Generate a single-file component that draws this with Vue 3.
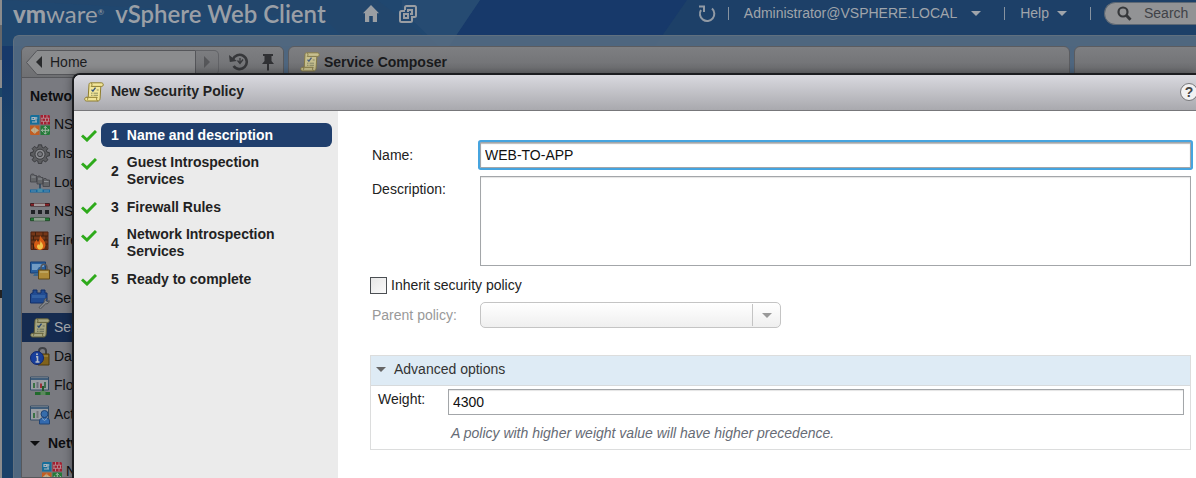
<script setup>
import { ref } from 'vue'

const navItems = [
  { icon: 'nsx', label: 'NSX Home' },
  { icon: 'gear', label: 'Installation' },
  { icon: 'switch', label: 'Logical Switches' },
  { icon: 'edges', label: 'NSX Edges' },
  { icon: 'firewall', label: 'Firewall' },
  { icon: 'spoof', label: 'SpoofGuard' },
  { icon: 'services', label: 'Service Definitions' },
  { icon: 'scroll', label: 'Service Composer', selected: true },
  { icon: 'data', label: 'Data Security' },
  { icon: 'flow', label: 'Flow Monitoring' },
  { icon: 'activity', label: 'Activity Monitoring' }
]

const steps = ['Name and description', 'Guest Introspection Services', 'Firewall Rules', 'Network Introspection Services', 'Ready to complete']
const current = ref(0)

const name = ref('WEB-TO-APP')
const description = ref('')
const inherit = ref(false)
const weight = ref('4300')
const advancedOpen = ref(true)
</script>

<template>
  <div class="page">
    <svg class="defs" width="0" height="0" aria-hidden="true">
      <defs>
        <symbol id="i-scroll" viewBox="0 0 20 20">
          <path d="M5 2.5C5 1.2 6 .8 7 .8h10.2c1.5 0 2.3 1 2 2.4-.1.8-.8 1.2-1.6 1.2h-.8l-.7 11.8c-.1 1.8-1 2.8-2.4 2.8H2.6C1.2 19 .6 18 .8 16.8c.1-1 .8-1.5 1.6-1.5h1.8z" fill="#f2e69a" stroke="#8d7c2e" />
          <path d="M7 .9c1.2.4 1.3 2.4.2 3.5h9.6M4.2 15.3h9c-1 1-.8 3.2.5 3.7M2.6 15.4c1.3.3 1.5 1.8.6 2.4" fill="none" stroke="#8d7c2e" />
          <path d="M7.5 7.6l1.4 1.6 2.6-3.5" fill="none" stroke="#35567f" stroke-width="1.4" />
          <path d="M12.7 8h2M7 11.2h1.5M9.5 11.2H14M7 13.3h1.5M9.5 13.3H14" stroke="#8f905f" />
        </symbol>
        <symbol id="i-nsx" viewBox="0 0 20 20">
          <path d="M0 1.5Q0 0 1.5 0H9.5v9.5H0z" fill="#176e99" />
          <path d="M10.5 0h8Q20 0 20 1.5v8h-9.5z" fill="#a31f30" />
          <path d="M0 10.500h9.500V20h-8Q0 20 0 18.500z" fill="#c15e22" />
          <path d="M10.500 10.500H20v8q0 1.500-1.500 1.500h-8z" fill="#247a38" />
          <path d="M2 2.500h2.500v2H2zM6 2v5.500M2 7h5M7.500 3h-3" fill="none" stroke="#a9b5bd" stroke-width="1.200" />
          <path d="M11 3.200h8.500M11 6.300h8.500M13.500 0v3M17 0v3M12 3.200v3M15.500 3.200v3M18.500 3.200v3M13.500 6.300v3M17 6.300v3" stroke="#b99a9f" stroke-width=".8" />
          <path d="M1 15.200l3-2.500v5zM5 13l3.500 2.300L5 17.800zM4.800 11.500v7.500" fill="#bdb08f" stroke="#bdb08f" stroke-width=".8" />
          <path d="M15.300 11.500v7.500M11.500 15.300H19M13.800 13l1.500-1.600 1.500 1.600M13.800 17.600l1.500 1.600 1.500-1.600M13 13.800l-1.600 1.500 1.600 1.500M17.600 13.800l1.600 1.500-1.600 1.500" fill="none" stroke="#a3b8a7" />
        </symbol>
        <symbol id="i-gear" viewBox="0 0 20 20">
          <g fill="#5c5d60" stroke="#303134" stroke-width=".8">
            <path d="M8.400.8h3.200l.5 2.400 1.400.6 2.100-1.400 2.200 2.200-1.400 2.100.6 1.400 2.400.5v3.200l-2.400.5-.6 1.400 1.400 2.100-2.200 2.200-2.100-1.400-1.400.6-.5 2.400H8.400l-.5-2.400-1.400-.6L4.400 18l-2.200-2.200 1.400-2.100-.6-1.400-2.400-.5V8.600L3 8.100l.6-1.400-1.400-2.100 2.200-2.200 2.100 1.400 1.400-.6z" />
            <circle cx="10" cy="10.200" r="5" fill="#8b8c90" />
            <circle cx="10" cy="10.200" r="2.500" fill="#77787d" />
          </g>
        </symbol>
        <symbol id="i-switch" viewBox="0 0 20 20">
          <path d="M.5 9V2.500l1-1.500h2l1 1.500h2V9zM7 11V4.500L8 3h2l1 1.500h2V11zM13 13.500V7l1-1.500h2L17 7h2.500v6.500z" fill="#636568" stroke="#414347" stroke-width=".8" />
          <path d="M1.500 4h4M8 6h4M14 8.500h4.500" stroke="#8e9196" />
          <path d="M10 11v6" stroke="#26435c" stroke-width="1.500" />
          <path d="M0 16.500h20v3H0z" fill="#15679f" /><path d="M7.500 15.500h5v3.500h-5z" fill="#488ba7" /><path d="M1 18h5M14 18h5" stroke="#6293b3" />
        </symbol>
        <symbol id="i-edges" viewBox="0 0 20 20">
          <path d="M.5 1.500h19V4H.5z" fill="#8d2027" stroke="#3f2024" /><path d="M4 1.500h11V4H4z" fill="#a19698" />
          <path d="M1 8h4v4H1zM8 8h4v4H8zM15 8h4v4h-4z" fill="#202226" />
          <path d="M.5 16h19v2.700H.5z" fill="#218238" stroke="#234b29" /><path d="M4 16h11v2.700H4z" fill="#8d9b8e" />
        </symbol>
        <symbol id="i-firewall" viewBox="0 0 20 20">
          <path d="M1 1h17v17.500H1z" fill="#753718" stroke="#522310" />
          <path d="M1 5h17M1 9h17M1 13h17M5.500 1v4M13 1v4M3.500 5v4M16 5v4M5.500 9v4M14 9v4M3.500 13v5M16 13v5" stroke="#3f200e" />
          <path d="M10 4c.5 2.700 5.500 5.500 5.500 9.800 0 3-2.500 5.200-5.500 5.200S4 17 4 14c0-2.500 1.600-4 2.500-5.500.6 1.700 1 2.200 1.700 2.700C9.700 9 9.800 6.600 10 4z" fill="#d55b13" />
          <path d="M10.500 9.500c.5 2 3 3.500 2.500 6-.3 1.800-1.500 3-3 3s-3-1.200-3-3c0-1 .6-1.800 1.200-2.500l1 1.200c1-1.300 1.300-3 1.300-4.700z" fill="#efc24a" />
        </symbol>
        <symbol id="i-spoof" viewBox="0 0 20 20">
          <path d="M.5 2h15v11H.5z" fill="#285e9c" stroke="#183f75" /><path d="M2 4h12v3H9l-2 3H2z" fill="#709ac3" /><path d="M5 13h5v3H3" fill="#3a668e" />
          <path d="M11 10V8c0-5 6-5 6 0v2" fill="none" stroke="#54565b" stroke-width="1.600" />
          <path d="M8.500 10h11v9h-11z" fill="#ad8a38" stroke="#5f481a" /><path d="M10 12h8" stroke="#ccbb7e" />
        </symbol>
        <symbol id="i-services" viewBox="0 0 20 20">
          <path d="M.5 5l1.500-1h1V1h4v3h4V1h4v3h2v10H.5z" fill="#214b91" stroke="#132f68" /><path d="M2 6h13v3H2z" fill="#315fa2" />
          <path d="M9 18.500l5.200-5.400c-.6-2 .8-3.700 2.600-3.800l-1 2 1.400 1.400 2-1c.2 2-1.600 3.600-3.500 3.100l-5.200 5z" fill="#86898d" stroke="#404246" stroke-width=".8" />
        </symbol>
        <symbol id="i-data" viewBox="0 0 20 20">
          <path d="M9 7V4c0-4 7-4 7 0v4" fill="none" stroke="#3f4145" stroke-width="2" /><path d="M8 7h11v11H8z" fill="#80621b" stroke="#4e3b10" /><path d="M10 9h8" stroke="#aa9250" />
          <circle cx="7" cy="11" r="6.500" fill="#183f9c" stroke="#12276b" /><path d="M6 9.800h1.500v5M5.500 15h4" fill="none" stroke="#b4bac4" stroke-width="1.600" /><circle cx="7" cy="7.300" r="1" fill="#b4bac4" />
        </symbol>
        <symbol id="i-flow" viewBox="0 0 20 20">
          <path d="M.5 1h18v13H.5z" fill="#9a9ea3" stroke="#344d66" /><path d="M1 2h17v2H1z" fill="#405d7a" /><path d="M3 7h2v5H3z" fill="#397244" /><path d="M6.500 6h2v6h-2z" fill="#68707a" /><path d="M10 7.500h2V12h-2z" fill="#9a3037" /><path d="M14 6h2v6h-2z" fill="#416e50" />
          <path d="M13 10v6" stroke="#245a2d" stroke-width="2" /><path d="M5 17.500h15" stroke="#216b2c" stroke-width="3" /><path d="M10.500 15h5v4h-5z" fill="#5b895d" />
        </symbol>
        <symbol id="i-activity" viewBox="0 0 20 20">
          <path d="M.5 1h18v14H.5z" fill="#9a9ea3" stroke="#344d66" /><path d="M1 2h17v2H1z" fill="#405d7a" /><path d="M3 8h2v5H3z" fill="#397244" /><path d="M6.500 6h2v7h-2z" fill="#75777b" />
          <circle cx="14.500" cy="9" r="3.500" fill="#376dab" stroke="#1f4476" /><path d="M9.500 19v-3c0-2 2-3.500 5-3.500s5 1.500 5 3.500v3z" fill="#3269ae" stroke="#1f4476" /><path d="M12 13.500l2.500 2 2.500-2" fill="none" stroke="#86a5c3" />
        </symbol>
      </defs>
    </svg>

    <div class="edge"></div>
    <div class="app">
      <svg class="rays" viewBox="0 0 1194 46" preserveAspectRatio="none" aria-hidden="true">
        <path d="M0 0H478L447 46H0z" fill="#20476f" />
        <path d="M0 0H375L435 46H350L322 18z" fill="#24466b" opacity=".6" />
        <path d="M400 0H478L447 46h-10L400 10z" fill="#2a4d73" opacity=".7" />
        <path d="M685 0H1194V46H653z" fill="#1d4068" />
      </svg>

      <header class="top">
        <h1 class="brand"><span class="vm"><b>vm</b>ware<sup>®</sup></span> vSphere Web Client</h1>
        <nav class="quick" aria-label="Quick links">
          <button type="button" aria-label="Home"><svg width="16" height="17" viewBox="0 0 16 17"><path d="M8 0l8 8.300h-2V17H9.800v-6H6.200v6H2V8.300H0z" fill="#9a9ea3" /></svg></button>
          <button type="button" aria-label="Open windows"><svg width="18" height="18" viewBox="0 0 18 18" fill="none" stroke="#9a9ea3" stroke-width="2"><path d="M6 5V2.500Q6 1 7.500 1h8Q17 1 17 2.500v8q0 1.500-1.500 1.500H13v3.500q0 1.500-1.500 1.500h-9Q1 17 1 15.500v-8Q1 6 2.500 6H6" /><path d="M9 7V5h4v4h-2" /><path d="M5 9h4v4H5z" /></svg></button>
        </nav>
        <div class="account">
          <button type="button" aria-label="Refresh"><svg width="18" height="18" viewBox="0 0 18 18" fill="none" stroke="#919aa5" stroke-width="2"><path d="M14 3.500A7.200 7.200 0 1 1 3 5" /><path d="M1 1.500h5V7" /></svg></button>
          <span class="bar"></span>
          <button type="button" class="menu user">Administrator@VSPHERE.LOCAL<i class="caret"></i></button>
          <span class="bar"></span>
          <button type="button" class="menu">Help<i class="caret"></i></button>
          <span class="bar"></span>
          <label class="search">
            <svg width="15" height="15" viewBox="0 0 15 15" fill="none" stroke="#36383b"><circle cx="6" cy="6" r="4.500" stroke-width="2.200" /><path d="M9.500 9.500l4 4.200" stroke-width="3" /></svg>
            <input type="text" placeholder="Search" aria-label="Search" />
          </label>
        </div>
      </header>

      <div class="frame">
        <aside class="navigator">
          <div class="crumbs">
            <button type="button" class="back">
              <svg class="outline" viewBox="0 0 170 25" preserveAspectRatio="none" aria-hidden="true"><path d="M.5 12.500L11 .5H169.500V24.500H11z" fill="#8b8c8e" stroke="#55565a" /></svg>
              <svg class="arrow" width="6" height="12" viewBox="0 0 6 12"><path d="M6 0v12L0 6z" fill="#292a2c" /></svg>
              <span>Home</span>
            </button>
            <button type="button" class="next" aria-label="Forward"><svg width="6" height="12" viewBox="0 0 6 12"><path d="M0 0v12l6-6z" fill="#56575a" /></svg></button>
            <button type="button" class="history" aria-label="History"><svg width="20" height="18" viewBox="0 0 20 18" fill="none" stroke="#37383b"><path d="M3.800 6.500a7.200 7.200 0 1 1 .8 6.500" stroke-width="2.600" /><path d="M0 2l.8 7 7-1z" fill="#37383b" stroke="none" /><path d="M11 5v5M8.500 7.500L11 10.500l3-4" stroke-width="1.300" /></svg></button>
            <button type="button" aria-label="Pin"><svg width="12" height="17" viewBox="0 0 12 17"><path d="M1 0h10v2H9.500v5l2.500 3H7v6l-1 1-1-1v-6H0l2.500-3V2H1z" fill="#303134" /></svg></button>
          </div>
          <nav class="tree" aria-label="Networking">
            <h2>Networking &amp; Security</h2>
            <a v-for="n in navItems" :key="n.label" href="#" :class="{ selected: n.selected }"><svg width="20" height="20"><use :href="'#i-' + n.icon" /></svg>{{ n.label }}</a>
            <button type="button" class="group"><i class="caret"></i>Networking Inventory</button>
            <a href="#" class="child"><svg width="20" height="20"><use href="#i-nsx" /></svg>NSX Managers</a>
          </nav>
        </aside>
        <section class="tab main"><svg width="20" height="20"><use href="#i-scroll" /></svg>Service Composer</section>
        <section class="tab side"></section>
      </div>
    </div>

    <section class="dialog" role="dialog" aria-labelledby="dialog-title">
      <header class="dialog-head">
        <svg width="20" height="20"><use href="#i-scroll" /></svg>
        <h2 id="dialog-title">New Security Policy</h2>
        <button type="button" class="question" aria-label="Help">?</button>
      </header>
      <div class="dialog-body">
        <ol class="steps">
          <li v-for="(s, i) in steps" :key="s">
            <svg class="check" width="16" height="12" viewBox="0 0 16 12"><path d="M1 5.500l5 4.500L15 1" fill="none" stroke="#2eaa1b" stroke-width="3" /></svg>
            <button type="button" :class="{ active: i === current }" @click="current = i"><span class="number">{{ i + 1 }}</span><span class="caption">{{ s }}</span></button>
          </li>
        </ol>
        <form class="form" @submit.prevent>
          <div class="row">
            <label for="name">Name:</label>
            <input id="name" v-model="name" class="text focused" type="text" />
          </div>
          <div class="row">
            <label for="description">Description:</label>
            <textarea id="description" v-model="description" class="text"></textarea>
          </div>
          <label class="tick"><input v-model="inherit" type="checkbox" />Inherit security policy</label>
          <div class="row parent">
            <label for="parent">Parent policy:</label>
            <span class="picker"><select id="parent" disabled></select><span class="drop"><i class="caret"></i></span></span>
          </div>
          <div class="advanced">
            <button type="button" class="toggle" :aria-expanded="advancedOpen" @click="advancedOpen = !advancedOpen"><i class="caret"></i>Advanced options</button>
            <div v-if="advancedOpen" class="options">
              <label for="weight">Weight:</label>
              <div class="value">
                <input id="weight" v-model="weight" class="text" type="text" />
                <p>A policy with higher weight value will have higher precedence.</p>
              </div>
            </div>
          </div>
        </form>
      </div>
    </section>
  </div>
</template>

<style>
body { margin: 0; }
</style>

<style scoped>
* { box-sizing: border-box; }
.page { position: relative; display: flex; height: 100vh; overflow: hidden; font: 14px/17px "Liberation Sans", Arial, sans-serif; color: #222; }
.defs { position: absolute; }
button { margin: 0; padding: 0; border: 0; background: none; font: inherit; color: inherit; text-align: left; }
input, textarea, select { margin: 0; font: inherit; color: #111; outline: none; }
h1, h2, p, ol { margin: 0; padding: 0; }
svg { display: block; flex: none; }
.caret { flex: none; width: 0; height: 0; border: 5px solid transparent; border-top-color: currentColor; border-bottom: 0; }

.edge { flex: none; width: 2px; background: linear-gradient(#8b8b8c 0 25px, #65676a 25px 60px, #8b8b8c 60px 88px, #1d4668 88px 97px, #8b8b8c 97px 290px, #222 290px 298px, #8b8b8c 298px); }
.app { position: relative; flex: 1; min-width: 0; display: flex; flex-direction: column; background: linear-gradient(#17396a, #17396a 60px, #1b4168 120px); }
.rays { position: absolute; top: 0; left: 0; width: 100%; height: 46px; }

.top { position: relative; display: flex; align-items: center; height: 27px; margin-bottom: 8px; padding-left: 11px; color: #a0a5ab; white-space: nowrap; overflow: hidden; }
.brand { display: flex; gap: 11px; font: 600 24px/27px Lato, sans-serif; color: #9a9fa6; }
.vm { font-weight: 400; }
.vm b { font-weight: 900; }
.vm sup { font-size: 8px; line-height: 8px; vertical-align: 8px; }
.quick { display: flex; align-items: center; gap: 20px; margin-left: 37px; }
.account { display: flex; align-items: center; margin-left: auto; }
.bar { width: 1px; height: 13px; background: #8793a0; }
.account > button:first-child { margin-right: 12px; }
.menu { display: flex; align-items: center; gap: 8px; margin: 0 23px 0 15px; }
.menu.user { gap: 14px; }
.search { display: flex; align-items: center; gap: 12px; width: 92px; height: 23px; margin-left: 13px; padding-left: 12px; border: 1px solid #5d6874; border-right: 0; border-radius: 12px 0 0 12px; background: #929395; }
.search input { flex: 1; min-width: 0; padding: 0; border: 0; background: none; appearance: none; }
.search input::placeholder { color: #404247; opacity: 1; }

.frame { position: relative; flex: 1; min-height: 0; display: flex; gap: 4px; margin-left: 11px; padding: 10px 0 0 7px; border: solid #60707f; border-width: 1px 0 0 1px; border-radius: 6px 0 0; background: #566c82e0; }
.navigator { flex: none; width: 263px; display: flex; flex-direction: column; border: 1px solid #56585c; border-radius: 6px 6px 0 0; background: #797a80; overflow: hidden; }
.crumbs { flex: none; display: flex; align-items: center; height: 31px; padding-left: 4px; border-bottom: 1px solid #55565a; background: linear-gradient(#7e7f82, #6e6f72); }
.back { position: relative; display: flex; align-items: center; gap: 8px; width: 170px; height: 25px; padding-left: 10px; color: #1b1c1e; }
.outline { position: absolute; inset: 0; width: 100%; height: 100%; }
.arrow, .back span { position: relative; }
.next { display: flex; align-items: center; justify-content: center; width: 23px; height: 25px; border: 1px solid #626367; border-left: 0; border-radius: 0 5px 5px 0; }
.history { margin: 0 13px 0 10px; }
.tree { flex: 1; width: 50px; overflow: hidden; color: #0d0e10; white-space: nowrap; }
.tree h2 { padding: 10px 8px 5px; font-size: 14px; line-height: 17px; }
.tree a { display: flex; align-items: center; gap: 4px; height: 29px; padding-left: 8px; color: inherit; text-decoration: none; }
.tree .selected { background: #152b50; color: #a6a9ae; }
.tree .selected svg { opacity: .65; }
.tree .child { padding-left: 20px; }
.group { display: flex; align-items: center; gap: 8px; height: 28px; padding-left: 8px; font-weight: bold; }
.tab { display: flex; align-items: center; gap: 4px; height: 32px; padding-left: 11px; border: 1px solid #5b5c60; border-radius: 6px 6px 0 0; background: linear-gradient(#7e7f82, #6b6c6f); font-weight: bold; color: #1a1b1d; }
.tab svg { opacity: .65; }
.main { flex: 1; }
.side { flex: none; width: 130px; margin-right: -8px; }

.dialog { position: absolute; inset: 73px 0 0 72px; display: flex; flex-direction: column; border: solid #1c1d20; border-width: 2px 0 0 2px; border-radius: 8px 0 0; background: #fff; box-shadow: 0 0 10px rgba(0, 0, 0, .4); overflow: hidden; }
.dialog-head { flex: none; display: flex; align-items: center; gap: 7px; height: 36px; padding: 0 0 2px 10px; border-bottom: 1px solid #77777a; background: linear-gradient(#d9d9df, #a9a9ae); }
.dialog-head h2 { font-size: 14px; }
.question { width: 18px; height: 18px; margin: 0 -2px 0 auto; border: 1px solid #77777a; border-radius: 50%; background: #f1f1f2; font-weight: bold; line-height: 16px; text-align: center; color: #444; }
.dialog-body { flex: 1; display: flex; min-height: 0; }
.steps { flex: none; display: flex; flex-direction: column; gap: 4px; width: 264px; padding: 12px 6px 0 7px; background: #ebebeb; list-style: none; }
.steps li { display: flex; align-items: flex-start; gap: 4px; }
.check { margin-top: 7px; }
.steps button { flex: 1; display: flex; align-items: center; gap: 8px; min-height: 24px; padding: 3px 32px 3px 10px; border-radius: 6px; font-weight: bold; }
.steps .active { background: #203f6d; color: #fff; }

.form { flex: 1; min-width: 0; display: flex; flex-direction: column; padding: 31px 5px 0 32px; }
.row { display: flex; margin-bottom: 8px; }
.row > label { flex: none; width: 110px; padding: 5px 0 0 2px; }
.text { display: block; flex: 1; min-width: 0; width: 100%; height: 26px; padding: 0 4px; border: 1px solid #a3a6a9; border-radius: 0; background: #fff; box-shadow: inset 0 1px 1px #e4e4e4; }
.focused { box-shadow: inset 0 1px 1px #bbb, 0 0 0 2px #46a4df; border-radius: 1px; }
textarea.text { height: 90px; resize: none; }
.tick { display: flex; align-items: center; gap: 4px; margin: 3px 0 8px; }
.tick input { width: 17px; height: 17px; appearance: none; border: 1px solid #4b4f53; border-radius: 0; background: linear-gradient(135deg, #e6e6e6, #fafafa); }
.parent { margin-bottom: 27px; color: #999; }
.picker { position: relative; flex: none; width: 301px; height: 26px; }
.picker select { width: 100%; height: 100%; appearance: none; border: 1px solid #c4c4c4; border-radius: 5px; background: linear-gradient(#fff, #efefef); opacity: 1; }
.drop { position: absolute; top: 2px; right: 1px; bottom: 2px; display: flex; align-items: center; justify-content: center; width: 28px; border-left: 1px solid #c4c4c4; pointer-events: none; }
.advanced { border: 1px solid #dcdddd; }
.toggle { display: flex; align-items: center; gap: 8px; width: 100%; height: 30px; padding: 0 0 2px 5px; border-bottom: 1px solid #d7dadc; background: #deebf5; color: #333; }
.toggle .caret { color: #666; }
.options { display: flex; padding: 3px 6px 7px 7px; }
.options > label { flex: none; width: 70px; padding-top: 2px; }
.value { flex: 1; min-width: 0; }
.value p { padding: 10px 3px 0; font-style: italic; color: #666b75; }
</style>
